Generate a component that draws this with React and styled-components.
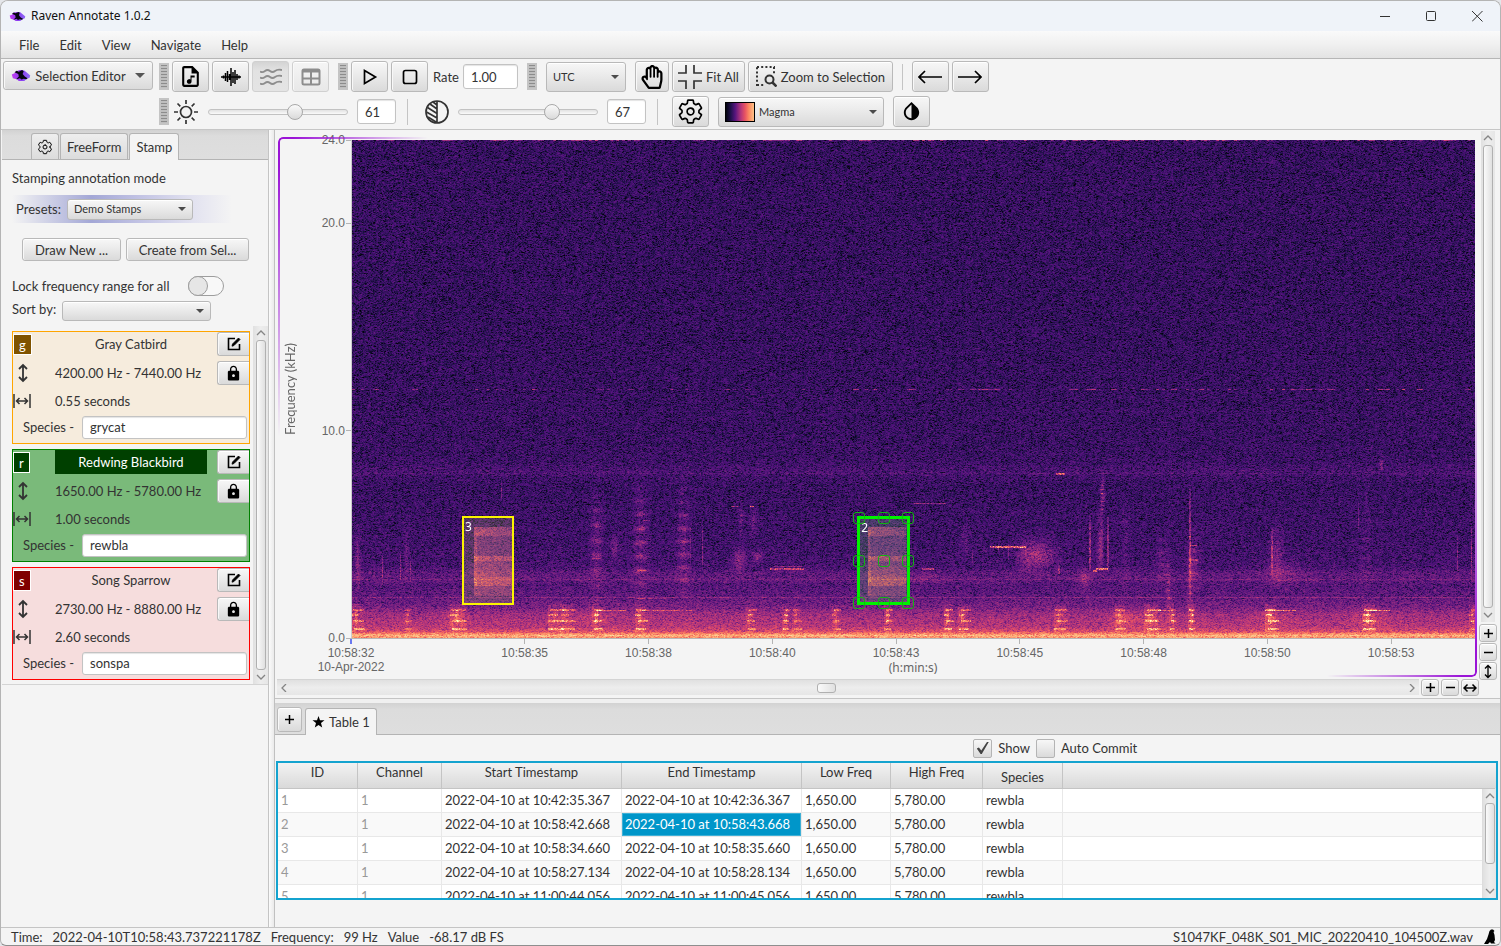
import React, { useEffect, useRef } from "react";
import styled, { createGlobalStyle, css } from "styled-components";
import { IoSettingsOutline } from "react-icons/io5";
import { MdOutlineAudioFile, MdLock, MdInvertColors } from "react-icons/md";
import { FaRegHandPaper } from "react-icons/fa";

const GlobalStyle = createGlobalStyle`
  *, *::before, *::after { box-sizing: border-box; }
  body { margin: 0; background: #e4e6ea; }
  body, button, input, select, table {
    font-family: Lato, "Open Sans", sans-serif;
    font-size: 13px;
    line-height: 16px;
    color: #333;
  }
  svg { display: block; flex: none; }
`;

const face = "linear-gradient(#f7f7f7, #ececec 40%, #dadada)";

/* ---------- frame ---------- */

const Window = styled.div`
  min-height: 100vh;
  display: flex;
  flex-direction: column;
  background: #f4f4f4;
  border: 1px solid #b4b4b4;
  border-bottom-color: #8e8e8e;
  border-radius: 8px 8px 6px 6px;
  overflow: hidden;
`;

const TitleBar = styled.header`
  display: flex;
  align-items: center;
  height: 30px;
  padding-left: 8px;
  background: #eff3f9;
`;

const Title = styled.h1`
  flex: 1;
  margin: 0 0 0 5px;
  font: 400 12px/16px "Noto Sans", sans-serif;
  color: #111;
`;

const WindowButton = styled.button`
  width: 46px;
  height: 30px;
  display: grid;
  place-items: center;
  border: 0;
  padding: 0;
  background: none;
`;

const MenuBar = styled.nav`
  display: flex;
  align-items: center;
  height: 28px;
  padding-left: 8px;
  background: linear-gradient(#fafafa, #f0f0f0 50%, #e3e3e3);
  border-bottom: 1px solid #b6b6b6;
`;

const MenuItem = styled.button`
  border: 0;
  background: none;
  padding: 0 10px;
`;

/* ---------- controls ---------- */

const Button = styled.button`
  display: flex;
  align-items: center;
  justify-content: center;
  gap: 4px;
  width: ${(p) => (p.$w ? `${p.$w}px` : "auto")};
  height: ${(p) => p.$h || 31}px;
  padding: 0;
  border: 1px solid #b9b9b9;
  border-radius: 3px;
  background: ${face};
  box-shadow: inset 0 1px 0 #fff, inset 1px 0 0 #f8f8f8;
  color: ${(p) => (p.$strong ? "#000" : "#333")};
  white-space: nowrap;
  ${(p) => p.$dim && css`color: #8d8d8d; border-color: #d0d0d0; background: linear-gradient(#f5f5f5, #e8e8e8);`}
  ${(p) => p.$pressed && css`background: linear-gradient(#d4d4d4, #e2e2e2 30%, #e4e4e4); box-shadow: none;`}
`;

const Grip = styled.span`
  width: 10px;
  height: 27px;
  flex: none;
  border: 2px solid #c4c4c4;
  background: repeating-linear-gradient(#8c8c8c 0 1px, #bebebe 1px 3px);
  margin: ${(p) => p.$m || "0"};
`;

const Separator = styled.span`
  width: 1px;
  height: 26px;
  flex: none;
  background: #c4c4c4;
  margin: 0 ${(p) => p.$r}px 0 ${(p) => p.$l}px;
`;

const Spacer = styled.span`
  width: 3px;
`;

const TextInput = styled.input`
  width: ${(p) => p.$w};
  height: ${(p) => p.$h || 25}px;
  padding: 0 7px;
  border: 1px solid #c3c3c3;
  border-radius: 3px;
  background: #fff;
  box-shadow: inset 0 1px 1px #e4e4e4;
  outline: 0;
`;

const SelectBox = styled.div`
  position: relative;
  display: flex;
  align-items: center;
  width: ${(p) => p.$w}px;
  height: ${(p) => p.$h}px;
  border: 1px solid #b9b9b9;
  border-radius: 3px;
  background: ${face};
  box-shadow: inset 0 1px 0 #fff;
  &::after {
    content: "";
    position: absolute;
    right: 6px;
    border: 4px solid transparent;
    border-top-color: #4b4b4b;
    border-bottom: 0;
    pointer-events: none;
  }
`;

const Swatch = styled.span`
  width: 30px;
  height: 20px;
  margin-left: 6px;
  border: 1px solid #000;
  background: linear-gradient(90deg, #02020d, #20114b 17%, #57157e 33%, #b5367a 53%, #e85362 68%, #fc8961 82%, #fec287);
`;

const Select = styled.select`
  flex: 1;
  min-width: 0;
  height: 100%;
  appearance: none;
  border: 0;
  outline: 0;
  background: none;
  padding: 0 20px 0 ${(p) => p.$pad || 6}px;
  font-size: 11px;
`;

const Range = styled.input`
  appearance: none;
  width: 140px;
  height: 18px;
  margin: 0;
  background: none;
  &::-webkit-slider-runnable-track {
    height: 6px;
    border: 1px solid #c2c2c2;
    border-radius: 3px;
    background: linear-gradient(#e2e2e2, #fafafa);
  }
  &::-webkit-slider-thumb {
    appearance: none;
    width: 16px;
    height: 16px;
    margin-top: -6px;
    border: 1px solid #a8a8a8;
    border-radius: 50%;
    background: linear-gradient(#fafafa, #dadada);
  }
`;

/* ---------- toolbars ---------- */

const ToolArea = styled.section`
  display: flex;
  gap: 6px;
  height: 71px;
  padding: 2px 2px 0;
  border-bottom: 1px solid #c6c6c6;
`;

const ToolRows = styled.div`
  display: flex;
  flex-direction: column;
  gap: 4px;
`;

const ToolRow = styled.div`
  display: flex;
  align-items: center;
  gap: 3px;
  height: 31px;
`;

const RateLabel = styled.label`
  display: flex;
  align-items: center;
  gap: 4px;
  margin-left: 2px;
`;

const IconLabel = styled.label`
  display: flex;
  align-items: center;
  gap: 9px;
  margin-left: ${(p) => p.$l}px;
  margin-right: 6px;
`;

const Arrow = styled.span`
  border: 5px solid transparent;
  border-top-color: #555;
  border-bottom: 0;
  margin-left: 5px;
`;

/* ---------- side panel ---------- */

const Main = styled.main`
  flex: 1;
  display: grid;
  grid-template-columns: 268px 6px minmax(0, 1fr);
`;

const Side = styled.aside`
  padding-left: 1px;
  border-right: 1px solid #c4c4c4;
`;

const VDivider = styled.div`
  background: linear-gradient(90deg, #fbfbfb, #eaeaea);
  border-right: 1px solid #c0c0c0;
`;

const TabBar = styled.div`
  display: flex;
  align-items: flex-end;
  gap: 1px;
  height: ${(p) => p.$h}px;
  padding-left: ${(p) => p.$pad}px;
  background: linear-gradient(#d2d2d2, #dcdcdc 20%, #dedede);
  border-bottom: 1px solid #b4b4b4;
`;

const Tab = styled.button`
  display: flex;
  align-items: center;
  justify-content: center;
  gap: 4px;
  height: ${(p) => (p.$active ? 27 : 26)}px;
  margin-bottom: ${(p) => (p.$active ? -1 : 0)}px;
  padding: 0 ${(p) => p.$pad || 6}px;
  border: 1px solid #b4b4b4;
  border-bottom: 0;
  border-radius: 3px 3px 0 0;
  white-space: nowrap;
  color: ${(p) => (p.$strong ? "#000" : "#333")};
  background: ${(p) => (p.$active ? "#f4f4f4" : "linear-gradient(#eee, #dcdcdc)")};
`;

const SideText = styled.p`
  margin: 10px 10px 9px;
`;

const Presets = styled.label`
  display: flex;
  align-items: center;
  gap: 6px;
  width: 220px;
  height: 28px;
  margin-left: 10px;
  padding-left: 4px;
  background: linear-gradient(90deg, #f4f4f4, #a3a7d6 36%, #c2c3e4 58%, #e2e2f0 82%, #f4f4f4);
`;

const ButtonPair = styled.div`
  display: flex;
  gap: 5px;
  margin: 15px 0 0 20px;
`;

const LockRow = styled.label`
  display: flex;
  align-items: center;
  gap: 19px;
  margin: 15px 0 0 10px;
`;

const Switch = styled.input`
  appearance: none;
  width: 36px;
  height: 20px;
  margin: 0;
  border: 1px solid #9d9d9d;
  border-radius: 10px;
  background: #f8f8f8;
  &::before {
    content: "";
    display: block;
    width: 20px;
    height: 20px;
    margin: -1px;
    border: 1px solid #9d9d9d;
    border-radius: 50%;
    background: #e6e6e6;
  }
`;

const SortRow = styled.label`
  display: flex;
  align-items: flex-start;
  gap: 6px;
  margin: 5px 0 0 10px;
`;

const StampPane = styled.div`
  display: grid;
  grid-template-columns: 238px 15px;
  gap: 3px;
  margin-top: 5px;
  padding-left: 10px;
  border-bottom: 1px solid #d4d4d4;
`;

const StampList = styled.div`
  display: flex;
  flex-direction: column;
  gap: 5px;
  padding: 5px 0 4px;
`;

const Card = styled.article`
  display: grid;
  grid-template-columns: 42px 1fr 32px;
  grid-template-rows: 24px 32px 22px 28px;
  row-gap: 1px;
  align-items: center;
  height: 113px;
  border: 1px solid ${(p) => p.$line};
  background: ${(p) => p.$fill};
`;

const KeyBadge = styled.span`
  justify-self: start;
  min-width: 17px;
  padding: 2px 5px 1px;
  border: 1px solid #fff;
  background: ${(p) => p.$c};
  color: #fff;
`;

const StampName = styled.span`
  width: 152px;
  height: 24px;
  line-height: 25px;
  text-align: center;
  background: ${(p) => p.$c};
  color: ${(p) => (p.$c ? "#fff" : "#333")};
`;

const Measure = styled.span`
  white-space: nowrap;
`;

const CardButton = styled(Button)`
  border-right: 0;
  border-radius: 3px 0 0 3px;
`;

const SpeciesRow = styled.label`
  grid-column: 1 / -1;
  display: flex;
  align-items: center;
  gap: 8px;
  padding: 0 2px 0 10px;
  white-space: nowrap;
`;

/* ---------- scroll bars ---------- */

const ScrollTrack = styled.div`
  display: flex;
  flex-direction: ${(p) => (p.$row ? "row" : "column")};
  align-items: center;
  justify-content: space-between;
  padding: ${(p) => (p.$row ? "0 3px" : "3px 0")};
  background: linear-gradient(${(p) => (p.$row ? "180deg" : "90deg")}, #e0e0e0, #ededed 50%, #e6e6e6);
  color: #858585;
`;

const Rail = styled.div`
  flex: 1;
  align-self: stretch;
  display: flex;
  flex-direction: ${(p) => (p.$row ? "row" : "column")};
  align-items: center;
  margin: ${(p) => (p.$row ? "0 3px" : "3px 0")};
`;

const RailSpace = styled.span`
  flex: ${(p) => p.$f} 1 0;
`;

const Thumb = styled.span`
  flex: ${(p) => p.$f};
  width: ${(p) => (p.$row ? 19 : 10)}px;
  height: ${(p) => (p.$row ? "10px" : "auto")};
  border: 1px solid #b0b0b0;
  border-radius: 3px;
  background: linear-gradient(90deg, #fafafa, #e0e0e0);
`;

/* ---------- chart ---------- */

const Work = styled.section`
  display: flex;
  flex-direction: column;
  min-width: 0;
`;

const ChartArea = styled.div`
  flex: 1;
  display: grid;
  grid-template-columns: minmax(0, 1fr) 18px;
  grid-template-rows: minmax(0, 1fr) 16px;
  row-gap: 2px;
  padding: 1px 3px 3px 2px;
  border-bottom: 1px solid #c4c4c4;
`;

const ChartFrame = styled.div`
  position: relative;
  display: grid;
  grid-template-columns: 72px minmax(0, 1fr);
  grid-template-rows: minmax(0, 1fr) 39px;
  margin: 6px 2px 0 1px;
  padding: 3px 2px 0 1px;
  &::before,
  &::after {
    content: "";
    position: absolute;
    inset: 0;
    border: 2px solid #9a14d6;
    pointer-events: none;
  }
  &::before {
    border-right: 0;
    border-bottom: 0;
    border-radius: 5px 0 0 0;
    mask-image: radial-gradient(150px 300px at 0 0, #000 10%, transparent);
  }
  &::after {
    border-left: 0;
    border-top: 0;
    border-radius: 0 0 5px 0;
    mask-image: radial-gradient(150px 300px at 100% 100%, #000 10%, transparent);
  }
`;

const YAxis = styled.div`
  display: grid;
  grid-template-columns: 22px 1fr;
  grid-template-rows: 4fr 10fr 10fr 0;
  font: 12px/16px "Liberation Sans", sans-serif;
  color: #666;
`;

const YTitle = styled.span`
  grid-row: 1 / -1;
  align-self: center;
  writing-mode: vertical-rl;
  transform: rotate(180deg);
  font-family: Lato, sans-serif;
  font-size: 13px;
  padding-right: 3px;
`;

const YTick = styled.span`
  grid-column: 2;
  display: flex;
  justify-content: flex-end;
  align-items: center;
  gap: 1px;
  height: 16px;
  margin-top: -8px;
  &::after {
    content: "";
    width: 5px;
    height: 1px;
    background: #b4b4b4;
  }
`;

const Plot = styled.div`
  position: relative;
  border-left: 1px solid #ccc;
  background: #1d0c45;
`;

const Canvas = styled.canvas`
  position: absolute;
  inset: 0;
  width: 100%;
  height: 100%;
`;

const XAxis = styled.div`
  grid-column: 2;
  display: grid;
  grid-template-columns: 174fr repeat(7, 124fr) 84fr;
  grid-template-rows: 22px 15px;
  border-top: 1px solid #b8b8b8;
  font: 12px/14px "Liberation Sans", sans-serif;
  color: #666;
`;

const XTick = styled.span`
  display: flex;
  flex-direction: column;
  align-items: center;
  width: 0;
  white-space: nowrap;
  &::before {
    content: "";
    flex: none;
    width: ${(p) => (p.$cursor ? 2 : 1)}px;
    height: 5px;
    margin-bottom: 2px;
    background: ${(p) => (p.$cursor ? "#6a78f0" : "#b4b4b4")};
  }
`;

const XTitle = styled.span`
  grid-row: 2;
  grid-column: 1 / -1;
  justify-self: center;
  font-family: "Noto Sans", sans-serif;
`;

const Region = styled.div`
  position: absolute;
  left: ${(p) => p.$x}%;
  top: 75.6%;
  width: ${(p) => p.$w}%;
  height: 17.8%;
  padding: 1px;
  border: ${(p) => p.$b}px solid ${(p) => p.$c};
  background: ${(p) => p.$fill};
  color: #fff;
  font: 12px/16px "Noto Sans", sans-serif;
`;

const Handles = styled.div`
  position: absolute;
  inset: -7px;
  display: grid;
  grid-template-columns: repeat(3, 12px);
  grid-template-rows: repeat(3, 12px);
  justify-content: space-between;
  align-content: space-between;
`;

const Handle = styled.i`
  border: 1px solid #12b512;
  border-radius: 3px;
`;

const ZoomColumn = styled.div`
  grid-row: 1 / 3;
  grid-column: 2;
  display: flex;
  flex-direction: column;
  align-items: center;
  gap: 1px;
  padding-bottom: 15px;
`;

const VScrollFill = styled.div`
  flex: 1;
  display: grid;
  grid-template-columns: 14px;
  margin-bottom: 1px;
`;

const HScroll = styled(ScrollTrack)`
  flex: 1;
  border-top: 1px solid #d4d4d4;
`;

const BottomScroll = styled.div`
  display: flex;
  align-items: stretch;
  gap: 2px;
`;

const MiniButton = styled(Button)`
  width: 18px;
  height: 18px;
  color: #000;
  flex: none;
  ${BottomScroll} & { height: 17px; }
`;

/* ---------- table ---------- */

const TablePane = styled.section`
  height: 228px;
  border-top: 4px solid #f0f0f0;
`;

const AddSlot = styled.div`
  align-self: center;
  padding: 1px 2px 0 0;
`;

const Options = styled.div`
  display: grid;
  grid-template-columns: 57fr 43fr;
  height: 26px;
`;

const OptionSet = styled.div`
  grid-column: 2;
  display: flex;
  align-items: center;
  gap: 6px;
`;

const Check = styled.label`
  display: flex;
  align-items: center;
  gap: 6px;
`;

const CheckBox = styled.input`
  appearance: none;
  width: 19px;
  height: 19px;
  margin: 0;
  display: grid;
  place-items: center;
  border: 1px solid #b4b4b4;
  border-radius: 2px;
  background: ${face};
  &:checked::before {
    content: "";
    width: 12px;
    height: 12px;
    background: #444;
    clip-path: polygon(0 55%, 18% 45%, 38% 70%, 85% 0, 100% 0, 42% 100%, 32% 100%);
  }
`;

const TableFrame = styled.div`
  display: grid;
  grid-template-columns: minmax(0, 1fr) 14px;
  grid-template-rows: 26px 109px;
  height: 139px;
  margin: 0 2px 0 1px;
  border: 2px solid #14a3cf;
  overflow: hidden;
  background: #fff;
`;

const Table = styled.table`
  grid-area: 1 / 1 / 3 / 3;
  width: 100%;
  table-layout: fixed;
  border-collapse: separate;
  border-spacing: 0;
  align-self: start;
`;

const Th = styled.th`
  width: ${(p) => p.$w};
  height: 26px;
  padding: ${(p) => (p.$low ? "2px 0 0" : "0 0 8px")};
  font-weight: 400;
  border-right: 1px solid ${(p) => (p.$last ? "transparent" : "#c4c4c4")};
  border-bottom: 1px solid #c4c4c4;
  background: linear-gradient(#f2f2f2, #ebebeb 30%, #d9d9d9);
  line-height: 14px;
`;

const Td = styled.td`
  height: 24px;
  padding: 0 0 2px 3px;
  white-space: nowrap;
  border-right: 1px solid #e8e8e8;
  border-bottom: 1px solid #e8e8e8;
  color: ${(p) => (p.$muted ? "#999" : "#333")};
  tr:nth-child(even) & { background: #f9f9f9; }
  ${(p) => p.$on && css`
    && { color: #fff; box-shadow: inset 0 0 0 1px #3fb0d6; }
    tr:nth-child(even) & { background: #0096c9; }
  `}
`;

const TableScroll = styled(ScrollTrack)`
  grid-area: 2 / 2;
  position: relative;
  border-left: 1px solid #ddd;
`;

/* ---------- status ---------- */

const Status = styled.footer`
  display: flex;
  align-items: center;
  height: 18px;
  padding: 0 4px 0 10px;
  border-top: 1px solid #c4c4c4;
  white-space: nowrap;
`;

const StatusItem = styled.span`
  margin-right: 10px;
`;

const FileName = styled.span`
  margin-left: auto;
  margin-right: 11px;
`;

/* ---------- icons ---------- */

const Stroke = ({ w = 16, h = w, box = `0 0 ${w} ${h}`, sw = 1.5, children }) => (
  <svg width={w} height={h} viewBox={box} fill="none" stroke="currentColor" strokeWidth={sw} aria-hidden="true">
    {children}
  </svg>
);

const RavenLogo = ({ w = 18 }) => (
  <svg width={w} height={Math.round(w * 0.67)} viewBox="0 0 18 12" aria-hidden="true">
    <defs>
      <linearGradient id="cloud" x1="0" x2="1">
        <stop offset="0" stopColor="#c23df2" />
        <stop offset="0.5" stopColor="#8b3df0" />
        <stop offset="1" stopColor="#8d6cf5" />
      </linearGradient>
    </defs>
    <path fill="url(#cloud)" d="M.5 5 3 4l1.500-2L8 1l4 .3L14 3l2 1.500 1.500 1.500-.5 2-2.500 1L12 11H7L5 9.500 1.500 8.500Z" />
    <path fill="#050510" d="M3 3 5 1.500l2 1L10 1l1.500 1-1 2.500L12.500 7l2.500 1.500-1 1-2.500-.5-2 .8L8 8.500 4.500 9.500 7 7 6.500 4.500Z" />
  </svg>
);

const RavenMark = () => (
  <svg width="12" height="15" viewBox="0 0 12 15" aria-hidden="true">
    <path fill="#000" d="M5.500 2 7 .5h2L10.500 2 9.500 3l1 3 .5 5-1 2 1.500 1.500H7L6 13l-2 2H0l3-5 1.500-4.500Z" />
  </svg>
);

const Plus = () => <Stroke w={11}><path d="M5.500 1v9M1 5.500h9" /></Stroke>;
const Minus = () => <Stroke w={11}><path d="M1 5.500h9" /></Stroke>;
const UpDown = ({ w = 12, h = 20 }) => (
  <Stroke w={w} h={h} box="0 0 12 20" sw={1.8}><path d="M6 2v16M2 6l4-4 4 4M2 14l4 4 4-4" /></Stroke>
);
const LeftRight = () => <Stroke w={14} h={12}><path d="M1 6h12M4.500 2.500 1 6l3.500 3.500M9.500 2.500 13 6l-3.500 3.500" /></Stroke>;
const Span = () => <Stroke w={18} h={14}><path d="M1 0v14M17 0v14M3 7h12M6.500 4l-3 3 3 3M11.500 4l3 3-3 3" /></Stroke>;
const Chevron = ({ d }) => {
  const paths = { up: "M1 6l4-4 4 4", down: "M1 2l4 4 4-4", left: "M6 0 2 4l4 4", right: "M4 0l4 4-4 4" };
  return <Stroke w={10} h={8} sw={1.3}><path d={paths[d]} /></Stroke>;
};

const Wave = () => (
  <Stroke w={20} h={20} sw={1.5}>
    <path d="M0 10h20M2.500 8.500v3M4.500 6v8M6.500 4v11M8.500 7v6M10 1v18M12 5v11M14 3v14M16 7v6M18 8.500v3" />
  </Stroke>
);
const Ripples = () => (
  <Stroke w={22} h={18} sw={1.8}>
    {[3, 9, 15].map((y) => (
      <path key={y} d={`M0 ${y + 0.5}q2.500 1.500 5-.5t5 0 5 0 7-1`} />
    ))}
  </Stroke>
);
const Grid = () => (
  <Stroke w={20} h={18} sw={2}>
    <rect x="1.500" y="1.500" width="17" height="15" rx="1.500" />
    <path d="M1.500 3h17" strokeWidth="3" />
    <path d="M10 4v12M2 10.500h16" />
  </Stroke>
);
const Sun = () => (
  <Stroke w={26} sw={1.7}>
    <circle cx="13" cy="13" r="5.500" />
    <path d="M13 1v4M13 21v4M1 13h4M21 13h4M4.500 4.500l2.800 2.800M18.700 18.700l2.800 2.800M21.500 4.500l-2.800 2.800M7.300 18.700l-2.800 2.800" />
  </Stroke>
);
const Contrast = () => (
  <Stroke w={24} sw={1.7}>
    <circle cx="12" cy="12" r="11" />
    <path d="M12 1v22M5 4l7 5M2.500 7.500 12 13.500M1.500 12 12 18M3 17l8 5M8 2l4 3" />
  </Stroke>
);
const FitIcon = () => <Stroke w={24} sw={1.7}><path d="M8 0v8H0M16 0v8h8M8 24v-8H0M16 24v-8h8" /></Stroke>;
const ZoomIcon = () => (
  <Stroke w={21} sw={2}>
    <path d="M1 20V1M1 1h18M18 1v8M1 19h8" strokeDasharray="2 2.200" />
    <circle cx="13.500" cy="13.500" r="4" />
    <path d="m16.500 16.500 4 4" strokeWidth="2.500" />
  </Stroke>
);
const LongArrow = ({ flip }) => (
  <Stroke w={24} h={14} sw={1.7}>
    <path d={flip ? "M0 7h23M17 1l6 6-6 6" : "M24 7H1M7 1 1 7l6 6"} />
  </Stroke>
);
const EditIcon = () => (
  <Stroke w={14} sw={1.6}>
    <path d="M8 1.500H1.500v11h11V7" />
    <path d="M5 9.200 5.500 7 11.500 1l1.500 1.500-6 6Z" fill="currentColor" strokeWidth="0.800" />
  </Stroke>
);

/* ---------- spectrogram ---------- */

const MAGMA = [
  [0, 0, 4], [28, 16, 68], [79, 18, 123], [129, 37, 129],
  [181, 54, 122], [229, 80, 100], [251, 135, 97], [254, 194, 135], [252, 253, 191],
];

function magma(v) {
  const t = Math.max(0, Math.min(0.999, v)) * 8;
  const i = Math.floor(t);
  const f = t - i;
  return MAGMA[i].map((c, k) => c + (MAGMA[i + 1][k] - c) * f);
}

/* noise floor: [y, level], y in a 1123 x 498 space */
const FLOOR = [
  [0, 0.19], [180, 0.19], [300, 0.2], [322, 0.21], [331, 0.245], [338, 0.215], [345, 0.2], [400, 0.215], [426, 0.235],
  [432, 0.29], [439, 0.31], [444, 0.27], [454, 0.29], [466, 0.35], [474, 0.45], [486, 0.51], [491, 0.6], [493, 0.74],
  [495, 0.84], [498, 0.76],
];

/* short chirps under 2 kHz: [x, width, gain] */
const CHIRPS = [
  [0, 11, 0.3], [52, 7, 0.18], [98, 15, 0.3], [196, 16, 0.3], [208, 14, 0.26], [240, 9, 0.34], [283, 10, 0.34],
  [394, 8, 0.26], [430, 6, 0.32], [440, 8, 0.22], [480, 7, 0.25], [532, 7, 0.32], [592, 8, 0.34], [606, 10, 0.32],
  [702, 12, 0.28], [763, 10, 0.26], [792, 14, 0.34], [817, 5, 0.3], [836, 6, 0.38], [913, 11, 0.38], [1010, 13, 0.36],
  [1117, 6, 0.28],
];

/* soft patches, centre and radius: [cx, cy, rx, ry, gain, stripe period] */
const PATCHES = [
  [244, 410, 6, 50, 0.17, 15], [288, 408, 7, 52, 0.19, 14], [331, 410, 7, 50, 0.18, 13], [387, 419, 6, 11, 0.17, 0],
  [405, 416, 6, 7, 0.13, 0], [686, 414, 16, 14, 0.22, 0], [672, 416, 8, 14, 0.08, 0], [750, 355, 2, 17, 0.3, 4],
  [748, 404, 3, 28, 0.2, 0], [773, 400, 4, 40, 0.06, 0], [732, 438, 5, 9, 0.17, 0], [810, 420, 6, 22, 0.1, 12],
  [930, 432, 18, 10, 0.1, 0], [924, 414, 7, 26, 0.12, 0], [1029, 324, 2, 5, 0.25, 0], [842, 418, 6, 28, 0.1, 12],
  [613, 400, 4, 14, 0.09, 0], [3, 420, 4, 26, 0.14, 0], [262, 408, 4, 12, 0.12, 0], [389, 378, 3, 14, 0.14, 5],
  [401, 382, 4, 12, 0.1, 0], [569, 438, 20, 5, 0.07, 0], [1014, 420, 5, 60, 0.07, 9], [54, 410, 2, 24, 0.09, 0],
  [838, 440, 4, 32, 0.14, 7], [816, 450, 3, 24, 0.15, 8], [242, 476, 18, 9, 0.06, 0], [795, 478, 22, 9, 0.07, 0],
  [770, 478, 12, 10, 0.1, 0], [920, 478, 18, 9, 0.08, 0], [1018, 478, 18, 9, 0.08, 0], [104, 478, 14, 10, 0.08, 0],
];

/* thin strokes: [x, y, width, height, gain] */
const STROKES = [
  [350, 380, 1, 50, 0.18], [837, 345, 2, 115, 0.22], [755, 375, 2, 56, 0.22], [737, 375, 2, 58, 0.24],
  [919, 388, 2, 50, 0.22], [1006, 355, 1, 40, 0.14], [149, 340, 1, 20, 0.2], [48, 412, 1, 30, 0.18],
  [30, 414, 1, 30, 0.16], [58, 415, 1, 28, 0.14], [1105, 395, 1, 40, 0.2], [1119, 385, 1, 55, 0.22],
  [620, 410, 1, 16, 0.1], [656, 402, 1, 18, 0.18], [646, 402, 1, 10, 0.16], [706, 424, 2, 10, 0.22], [338, 385, 1, 40, 0.12],
  [638, 406, 36, 2, 0.45], [418, 428, 34, 2, 0.3], [422, 426, 28, 1, 0.18], [744, 428, 12, 2, 0.42], [741, 430, 4, 2, 0.32],
  [704, 333, 9, 2, 0.38], [398, 366, 4, 1, 0.4], [379, 366, 8, 1, 0.28], [562, 363, 32, 1, 0.2],
  [570, 428, 12, 2, 0.26], [245, 470, 30, 1, 0.24], [290, 470, 50, 1, 0.22], [920, 470, 24, 1, 0.32],
  [1016, 470, 22, 1, 0.3], [800, 470, 20, 1, 0.2], [926, 440, 40, 1, 0.1], [284, 458, 30, 1, 0.14],
  [290, 380, 8, 1, 0.18], [285, 430, 10, 1, 0.2], [240, 418, 10, 1, 0.2], [838, 405, 7, 1, 0.22], [838, 419, 8, 2, 0.26],
];

/* the repeated redwing call, as bands: [dy, height, gain] */
const CALL_BANDS = [[10, 9, 0.24], [19, 20, 0.12], [39, 5, 0.3], [44, 16, 0.18], [60, 5, 0.26], [65, 4, 0.28], [69, 10, 0.12]];
const CALL_AT = [122, 516];

function paint(canvas) {
  const W = Math.max(1, canvas.clientWidth);
  const H = Math.max(1, canvas.clientHeight);
  canvas.width = W;
  canvas.height = H;
  const ctx = canvas.getContext("2d");
  const img = ctx.createImageData(W, H);
  let seed = 20220410;
  const rnd = () => {
    seed = (seed + 0x6d2b79f5) | 0;
    let t = Math.imul(seed ^ (seed >>> 15), 1 | seed);
    t = (t + Math.imul(t ^ (t >>> 7), 61 | t)) ^ t;
    return (((t ^ (t >>> 14)) >>> 0) + 1) / 4294967298;
  };
  const gain = new Float32Array(W * H);
  const add = (x, y, w, h, level) => {
    const x0 = Math.max(0, Math.round((x / 1123) * W));
    const x1 = Math.min(W, Math.round(((x + w) / 1123) * W));
    const y0 = Math.max(0, Math.round((y / 498) * H));
    const y1 = Math.min(H, Math.round(((y + h) / 498) * H));
    for (let j = y0; j < y1; j++) {
      for (let i = x0; i < x1; i++) {
        gain[j * W + i] += level((i - x0) / (x1 - x0), (j - y0) / (y1 - y0), j - y0);
      }
    }
  };
  PATCHES.forEach(([cx, cy, rx, ry, g, period]) => {
    add(cx - 2 * rx, cy - 2 * ry, 4 * rx, 4 * ry, (u, v, dj) => {
      const s = period ? 0.4 + 0.9 * Math.pow(Math.cos((dj * Math.PI) / period), 6) : 1;
      const d = Math.pow((u - 0.5) * 4, 2) + Math.pow((v - 0.5) * 4, 2);
      return g * s * Math.exp(-1.1 * d) * (0.6 + 0.8 * rnd());
    });
  });
  STROKES.forEach(([x, y, w, h, g]) => {
    add(x, y, w, h, (u, v) => g * (h > 4 ? Math.pow(Math.sin(Math.PI * (v * 0.94 + 0.03)), 0.6) : 1) * (0.45 + 0.9 * rnd()));
  });
  CHIRPS.forEach(([x, w, g]) => {
    add(x, 464, w, 28, (u) => g * 0.22 * (1 - u * 0.4) * (0.5 + rnd()));
    [469, 474, 480, 488].forEach((y, k) => {
      const shift = rnd() * 3;
      add(x + shift, y, w * (k === 1 ? 0.6 : 1), 2, () => g * 0.8 * (0.4 + 0.8 * rnd()));
    });
    add(x + w * 0.3, 470, 3, 14, () => g * 0.5 * rnd());
  });
  CALL_AT.forEach((x) => {
    CALL_BANDS.forEach(([dy, h, g]) => add(x, 377 + dy, 38, h, (u) => g * (1.05 - u * 0.3) * (0.7 + 0.6 * rnd())));
    add(x, 390, 3, 66, () => 0.14 * rnd());
  });

  let clump = 0;
  for (let j = 0; j < H; j++) {
    const y = (j / H) * 498;
    let k = 0;
    while (k < FLOOR.length - 2 && FLOOR[k + 1][0] < y) k++;
    const [ya, la] = FLOOR[k];
    const [yb, lb] = FLOOR[k + 1];
    const base = la + ((lb - la) * (y - ya)) / (yb - ya);
    const yi = Math.round(y);
    const line = yi === 271 ? 0.02 : yi === 333 ? 0.03 : yi === 439 ? 0.05 : yi === 457 ? 0.1 : 0;
    let dash = 0;
    let prev = 0;
    for (let i = 0; i < W; i++) {
      if (yi === 249 || yi === 0) {
        if (i % 24 === 0) clump = rnd();
        if (i % 3 === 0) dash = rnd() < clump * (yi ? 0.6 : 0.8) ? 0.1 + rnd() * 0.22 : 0;
      }
      const raw = Math.max(-3.4, Math.log(-Math.log(rnd())));
      const n = raw * 0.85 + prev * 0.25;
      prev = raw;
      const [r, g, b] = magma(base + 0.02 + line + dash + gain[j * W + i] + n * 0.055);
      const o = (j * W + i) * 4;
      img.data[o] = r;
      img.data[o + 1] = g;
      img.data[o + 2] = b;
      img.data[o + 3] = 255;
    }
  }
  ctx.putImageData(img, 0, 0);
}

function Spectrogram() {
  const ref = useRef(null);
  useEffect(() => {
    const canvas = ref.current;
    paint(canvas);
    const watcher = new ResizeObserver(() => {
      if (canvas.clientWidth !== canvas.width || canvas.clientHeight !== canvas.height) paint(canvas);
    });
    watcher.observe(canvas);
    return () => watcher.disconnect();
  }, []);
  return <Canvas ref={ref} role="img" aria-label="Spectrogram" />;
}

/* ---------- data ---------- */

const STAMPS = [
  { k: "g", name: "Gray Catbird", hz: "4200.00 Hz - 7440.00 Hz", s: "0.55 seconds", sp: "grycat", line: "#ffa500", fill: "#f6ecdd", dark: "#805300" },
  { k: "r", name: "Redwing Blackbird", hz: "1650.00 Hz - 5780.00 Hz", s: "1.00 seconds", sp: "rewbla", line: "#008000", fill: "#7aba7a", dark: "#004000", on: true },
  { k: "s", name: "Song Sparrow", hz: "2730.00 Hz - 8880.00 Hz", s: "2.60 seconds", sp: "sonspa", line: "#ff0000", fill: "#f6dddd", dark: "#800000" },
];

const COLUMNS = [
  ["ID", "80px"], ["Channel", "84px"], ["Start Timestamp", "180px"], ["End Timestamp", "180px"],
  ["Low Freq", "89px"], ["High Freq", "92px"], ["Species", "80px"], ["", "auto"],
];

const ROWS = [
  ["10:42:35.367", "10:42:36.367"],
  ["10:58:42.668", "10:58:43.668"],
  ["10:58:34.660", "10:58:35.660"],
  ["10:58:27.134", "10:58:28.134"],
  ["11:00:44.056", "11:00:45.056"],
];

const TIMES = ["10:58:35", "10:58:38", "10:58:40", "10:58:43", "10:58:45", "10:58:48", "10:58:50", "10:58:53"];

function VScroll({ track: Track = ScrollTrack, size = 1, rest = 0 }) {
  return (
    <Track>
      <Chevron d="up" />
      <Rail>
        <Thumb $f={`${size} 1 0`} />
        {rest > 0 && <RailSpace $f={rest} />}
      </Rail>
      <Chevron d="down" />
    </Track>
  );
}

function StampCard({ stamp }) {
  return (
    <Card $line={stamp.line} $fill={stamp.fill}>
      <KeyBadge $c={stamp.dark}>{stamp.k}</KeyBadge>
      <StampName $c={stamp.on ? stamp.dark : undefined}>{stamp.name}</StampName>
      <CardButton $h={24} $strong aria-label={`Edit ${stamp.name}`}><EditIcon /></CardButton>
      <Measure><UpDown w={20} /></Measure>
      <Measure>{stamp.hz}</Measure>
      <CardButton $h={24} $strong aria-label={`Lock ${stamp.name}`}><MdLock size={17} /></CardButton>
      <Measure><Span /></Measure>
      <Measure>{stamp.s}</Measure>
      <span />
      <SpeciesRow>
        Species -
        <TextInput $w="165px" $h={23} defaultValue={stamp.sp} />
      </SpeciesRow>
    </Card>
  );
}

function Toolbar() {
  return (
    <ToolArea>
      <Button $w={150} $h={29}><RavenLogo w={20} />Selection Editor<Arrow /></Button>
      <ToolRows>
        <ToolRow>
          <Grip />
          <Button $w={37} $strong aria-label="Audio file"><MdOutlineAudioFile size={25} /></Button>
          <Button $w={37} $strong aria-label="Waveform"><Wave /></Button>
          <Button $w={37} $dim $pressed aria-label="Spectrogram"><Ripples /></Button>
          <Button $w={37} $dim aria-label="Table"><Grid /></Button>
          <Grip $m="0 0 0 6px" />
          <Button $w={37} $strong aria-label="Play"><Stroke w={16}><path d="M2.500 1.500v13l11-6.500Z" strokeWidth="1.700" /></Stroke></Button>
          <Button $w={37} $strong aria-label="Stop"><Stroke w={16}><rect x="1.500" y="1.500" width="13" height="13" rx="2" strokeWidth="1.700" /></Stroke></Button>
          <RateLabel>Rate<TextInput $w="55px" defaultValue="1.00" /></RateLabel>
          <Grip $m="0 6px" />
          <SelectBox $w={80} $h={30}>
            <Select aria-label="Time zone"><option>UTC</option></Select>
          </SelectBox>
          <Spacer />
          <Button $w={34} $strong aria-label="Pan"><FaRegHandPaper size={24} /></Button>
          <Button $w={73}><FitIcon />Fit All</Button>
          <Button $w={145}><ZoomIcon />Zoom to Selection</Button>
          <Separator $l={6} $r={6} />
          <Button $w={37} $strong aria-label="Back"><LongArrow /></Button>
          <Button $w={37} $strong aria-label="Forward"><LongArrow flip /></Button>
        </ToolRow>
        <ToolRow>
          <Grip />
          <IconLabel $l={1}><Sun /><Range type="range" defaultValue="64" aria-label="Brightness" /></IconLabel>
          <TextInput $w="39px" defaultValue="61" aria-label="Brightness value" />
          <Separator $l={8} $r={8} />
          <IconLabel $l={6}><Contrast /><Range type="range" defaultValue="70" aria-label="Contrast" /></IconLabel>
          <TextInput $w="39px" defaultValue="67" aria-label="Contrast value" />
          <Separator $l={8} $r={11} />
          <Button $w={37} $strong aria-label="Settings"><IoSettingsOutline size={27} /></Button>
          <Spacer />
          <SelectBox $w={166} $h={30}>
            <Swatch />
            <Select $pad={4} aria-label="Color map"><option>Magma</option></Select>
          </SelectBox>
          <Spacer />
          <Button $w={37} $strong aria-label="Invert colors"><MdInvertColors size={23} /></Button>
        </ToolRow>
      </ToolRows>
    </ToolArea>
  );
}

function SidePanel() {
  return (
    <Side>
      <TabBar $h={30} $pad={29}>
        <Tab $strong $pad={5} aria-label="Settings"><IoSettingsOutline size={16} /></Tab>
        <Tab>FreeForm</Tab>
        <Tab $active>Stamp</Tab>
      </TabBar>
      <SideText>Stamping annotation mode</SideText>
      <Presets>
        Presets:
        <SelectBox $w={126} $h={21}>
          <Select><option>Demo Stamps</option></Select>
        </SelectBox>
      </Presets>
      <ButtonPair>
        <Button $w={99} $h={23}>Draw New ...</Button>
        <Button $w={123} $h={23}>Create from Sel...</Button>
      </ButtonPair>
      <LockRow>Lock frequency range for all<Switch type="checkbox" role="switch" /></LockRow>
      <SortRow>
        Sort by:
        <SelectBox $w={149} $h={20}><Select><option> </option></Select></SelectBox>
      </SortRow>
      <StampPane>
        <StampList>{STAMPS.map((s) => <StampCard key={s.k} stamp={s} />)}</StampList>
        <VScroll />
      </StampPane>
    </Side>
  );
}

function Chart() {
  return (
    <ChartArea>
      <ChartFrame>
        <YAxis>
          <YTitle>Frequency (kHz)</YTitle>
          {["24.0", "20.0", "10.0", "0.0"].map((t) => <YTick key={t}>{t}</YTick>)}
        </YAxis>
        <Plot>
          <Spectrogram />
          <Region $x={9.8} $w={4.6} $b={2} $c="#fbf400" $fill="rgba(200,200,100,.2)">3</Region>
          <Region $x={45} $w={4.7} $b={3} $c="#00f000" $fill="rgba(110,190,110,.24)">
            2
            <Handles>{Array.from({ length: 9 }, (_, i) => <Handle key={i} />)}</Handles>
          </Region>
        </Plot>
        <XAxis>
          <XTick $cursor>10:58:32<span>10-Apr-2022</span></XTick>
          {TIMES.map((t) => <XTick key={t}>{t}</XTick>)}
          <XTitle>(h:min:s)</XTitle>
        </XAxis>
      </ChartFrame>
      <ZoomColumn>
        <VScrollFill><VScroll /></VScrollFill>
        <MiniButton aria-label="Zoom in frequency"><Plus /></MiniButton>
        <MiniButton aria-label="Zoom out frequency"><Minus /></MiniButton>
        <MiniButton aria-label="Fit frequency"><UpDown w={10} h={15} /></MiniButton>
      </ZoomColumn>
      <BottomScroll>
        <HScroll $row>
          <Chevron d="left" />
          <Rail $row><RailSpace $f={48} /><Thumb $row $f="none" /><RailSpace $f={52} /></Rail>
          <Chevron d="right" />
        </HScroll>
        <MiniButton aria-label="Zoom in time"><Plus /></MiniButton>
        <MiniButton aria-label="Zoom out time"><Minus /></MiniButton>
        <MiniButton aria-label="Fit time"><LeftRight /></MiniButton>
      </BottomScroll>
    </ChartArea>
  );
}

function Annotations() {
  return (
    <TablePane>
      <TabBar $h={32} $pad={2}>
        <AddSlot><Button $w={25} $h={25} $strong aria-label="Add table"><Plus /></Button></AddSlot>
        <Tab $active>
          <svg width="13" height="12" viewBox="0 0 13 12" aria-hidden="true">
            <path d="m6.500 0 1.500 4.200h4.500L9 7l1.200 4.500L6.500 9l-3.700 2.500L4 7 .5 4.200H5Z" fill="#000" />
          </svg>
          Table 1
        </Tab>
      </TabBar>
      <Options>
        <OptionSet>
          <Check><CheckBox type="checkbox" defaultChecked />Show</Check>
          <Check><CheckBox type="checkbox" />Auto Commit</Check>
        </OptionSet>
      </Options>
      <TableFrame>
        <Table>
          <thead>
            <tr>
              {COLUMNS.map(([name, w]) => (
                <Th key={name} $w={w} $low={name === "Species"} $last={!name}>{name}</Th>
              ))}
            </tr>
          </thead>
          <tbody>
            {ROWS.map(([start, end], i) => (
              <tr key={start}>
                <Td $muted>{i + 1}</Td>
                <Td $muted>1</Td>
                <Td>2022-04-10 at {start}</Td>
                <Td $on={i === 1}>2022-04-10 at {end}</Td>
                <Td>1,650.00</Td>
                <Td>5,780.00</Td>
                <Td>rewbla</Td>
                <Td />
              </tr>
            ))}
          </tbody>
        </Table>
        <VScroll track={TableScroll} size={64} rest={22} />
      </TableFrame>
    </TablePane>
  );
}

export default function App() {
  return (
    <>
      <GlobalStyle />
      <Window>
        <TitleBar>
          <RavenLogo w={17} />
          <Title>Raven Annotate 1.0.2</Title>
          <WindowButton aria-label="Minimize"><Stroke w={11} sw={1}><path d="M0 5.500h10" /></Stroke></WindowButton>
          <WindowButton aria-label="Maximize"><Stroke w={11} sw={1}><rect x="0.500" y="0.500" width="9" height="9" rx="1" /></Stroke></WindowButton>
          <WindowButton aria-label="Close"><Stroke w={11} sw={1}><path d="m0 0 10.500 10.500M10.500 0 0 10.500" /></Stroke></WindowButton>
        </TitleBar>
        <MenuBar>
          {["File", "Edit", "View", "Navigate", "Help"].map((m) => <MenuItem key={m}>{m}</MenuItem>)}
        </MenuBar>
        <Toolbar />
        <Main>
          <SidePanel />
          <VDivider />
          <Work>
            <Chart />
            <Annotations />
          </Work>
        </Main>
        <Status>
          <StatusItem>Time:</StatusItem>
          <StatusItem>2022-04-10T10:58:43.737221178Z</StatusItem>
          <StatusItem>Frequency:</StatusItem>
          <StatusItem>99 Hz</StatusItem>
          <StatusItem>Value</StatusItem>
          <StatusItem>-68.17 dB FS</StatusItem>
          <FileName>S1047KF_048K_S01_MIC_20220410_104500Z.wav</FileName>
          <RavenMark />
        </Status>
      </Window>
    </>
  );
}
